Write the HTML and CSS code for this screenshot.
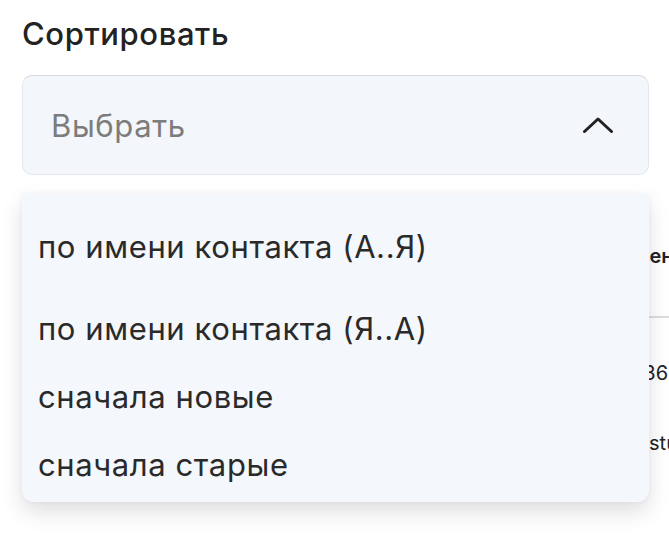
FILE: index.html
```html
<!DOCTYPE html>
<html lang="ru">
  <head>
    <meta charset="UTF-8" />
    <meta name="viewport" content="width=device-width, initial-scale=1.0" />
    <title>Сортировать</title>
    <link rel="stylesheet" href="styles.css">
  </head>
  <body>
    <div class="page">
      <h1 class="label">Сортировать</h1>

      <div class="select">
        <div class="select-box">
          <span class="placeholder">Выбрать</span>
          <svg class="chevron" width="30" height="16" viewBox="0 0 30 16">
            <polyline points="1.5,14.5 15,2 28.5,14.5" />
          </svg>
        </div>

        <ul class="menu">
          <li class="menu-item first">по имени контакта (А..Я)</li>
          <li class="menu-item">по имени контакта (Я..А)</li>
          <li class="menu-item">сначала новые</li>
          <li class="menu-item">сначала старые</li>
        </ul>
      </div>

      <div class="table">
        <div class="row head">
          <span>Контакт</span>
          <span>Менеджер</span>
        </div>
        <div class="row">
          <span>Иван Петров</span>
          <span>836 400</span>
        </div>
        <div class="row">
          <span>Анна Смирнова</span>
          <span>Mstudio</span>
        </div>
      </div>
    </div>
  </body>
</html>
```

FILE: styles.css
```css
* {
  box-sizing: border-box;
}

html,
body {
  height: 100%;
}

body {
  margin: 0;
  background-color: #ffffff;
  font-family: Inter, "Noto Sans", "DejaVu Sans", sans-serif;
  color: #222222;
  overflow: hidden;
}

.page {
  width: 669px;
  padding-left: 22px;
}

.label {
  margin: 0;
  padding-top: 16px;
  font-size: 31px;
  line-height: 36px;
  font-weight: 500;
  letter-spacing: 0.6px;
  color: #222222;
}

.select {
  position: relative;
  width: 627px;
  margin-top: 23px;
  z-index: 2;
}

.select-box {
  display: flex;
  justify-content: space-between;
  align-items: center;
  height: 100px;
  padding: 0 35px 0 28px;
  border: 1px solid #e4e7eb;
  border-top-color: #d6d9dd;
  border-radius: 10px;
  background-color: #f3f6fa;
}

.placeholder {
  font-size: 31px;
  letter-spacing: 0.6px;
  color: #7c7c7c;
}

.chevron polyline {
  fill: none;
  stroke: #222222;
  stroke-width: 3;
  stroke-linecap: round;
  stroke-linejoin: round;
}

.menu {
  position: absolute;
  top: calc(100% + 19px);
  left: 0;
  right: 0;
  margin: 0;
  padding: 18px 0 4px;
  list-style: none;
  background-color: #f4f7fc;
  border-radius: 0 0 12px 12px;
  box-shadow: 0 10px 22px rgba(0, 0, 0, 0.13), 0 0 6px rgba(0, 0, 0, 0.04);
}

.menu-item {
  display: flex;
  align-items: center;
  height: 68px;
  padding-left: 16px;
  font-size: 31px;
  letter-spacing: 0.6px;
  color: #2a2a2a;
}

.menu-item.first {
  margin-bottom: 14px;
}

.table {
  padding-top: 69px;
  overflow: hidden;
}

.row {
  display: grid;
  grid-template-columns: 609px auto;
  height: 70px;
  padding-top: 43px;
  font-size: 20px;
  line-height: 24px;
  white-space: nowrap;
}

.row.head {
  height: 74px;
  padding-top: 0;
  font-weight: 600;
  border-bottom: 2px solid #dedede;
}
```
